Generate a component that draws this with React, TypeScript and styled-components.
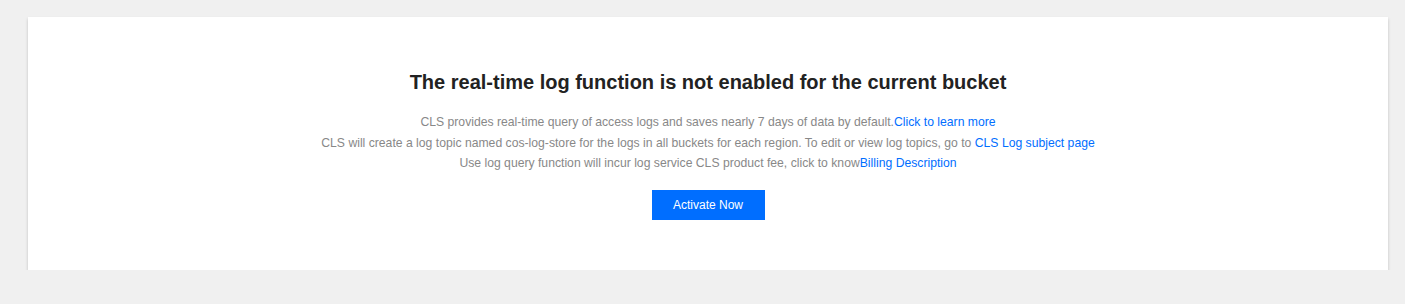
import React from 'react';
import styled, { createGlobalStyle } from 'styled-components';

const GlobalStyle = createGlobalStyle`
  html, body {
    margin: 0;
    padding: 0;
    background: #f0f0f0;
    font-family: "Liberation Sans", Arial, Helvetica, sans-serif;
  }
`;

const Page = styled.div`
  padding: 17px 17px 0 28px;
`;

const Card = styled.section`
  background: #fff;
  box-shadow: 0 2px 3px rgba(0, 0, 0, 0.2);
  height: 253px;
  box-sizing: border-box;
  padding-top: 51px;
  display: flex;
  flex-direction: column;
  align-items: center;
`;

const Title = styled.h2`
  margin: 0 0 16px;
  font-size: 20px;
  line-height: 28px;
  font-weight: 700;
  color: #222;
`;

const Desc = styled.p`
  margin: 0;
  font-size: 12.2px;
  line-height: 20.5px;
  color: #888;
  text-align: center;
`;

const TextLink = styled.a`
  color: #006eff;
  text-decoration: none;
  cursor: pointer;
`;

const PrimaryButton = styled.button`
  margin-top: 16px;
  width: 113px;
  height: 30px;
  border: none;
  background: #006eff;
  color: #fff;
  font-family: inherit;
  font-size: 12px;
  cursor: pointer;
`;

export default function App() {
  return (
    <>
      <GlobalStyle />
      <Page>
        <Card>
          <Title>The real-time log function is not enabled for the current bucket</Title>
          <Desc>
            CLS provides real-time query of access logs and saves nearly 7 days of data by default.
            <TextLink>Click to learn more</TextLink>
          </Desc>
          <Desc>
            CLS will create a log topic named cos-log-store for the logs in all buckets for each region. To edit or
            view log topics, go to <TextLink>CLS Log subject page</TextLink>
          </Desc>
          <Desc>
            Use log query function will incur log service CLS product fee, click to know
            <TextLink>Billing Description</TextLink>
          </Desc>
          <PrimaryButton>Activate Now</PrimaryButton>
        </Card>
      </Page>
    </>
  );
}
